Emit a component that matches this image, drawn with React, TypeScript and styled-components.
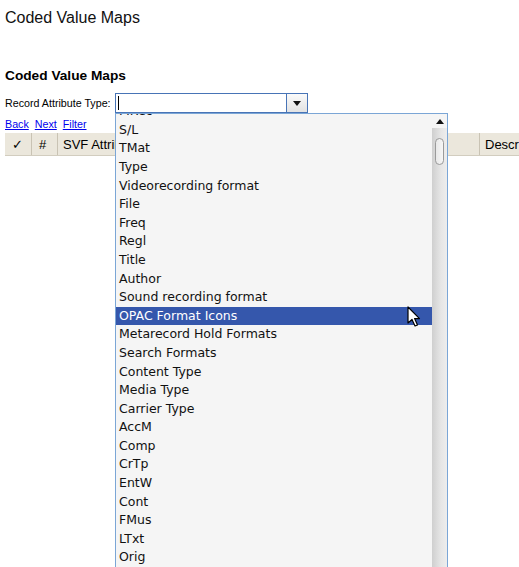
import React from "react";
import styled, { createGlobalStyle } from "styled-components";

const Global = createGlobalStyle`
  html, body { margin: 0; padding: 0; background: #fff; overflow: hidden; }
  body { font-family: "Liberation Sans", Arial, sans-serif; color: #000; }
  #root { width: 519px; height: 567px; overflow: hidden; }
`;

const Page = styled.div`
  padding: 8px 0 0 5px;
  width: 600px;
`;

const Title = styled.h1`
  margin: 0;
  font-size: 16px;
  line-height: 19px;
  font-weight: normal;
  color: #111;
`;

const Heading = styled.h2`
  margin: 41px 0 0;
  font-size: 13.7px;
  line-height: 16px;
  font-weight: bold;
`;

const FormRow = styled.div`
  display: flex;
  align-items: center;
  margin-top: 9px;
  height: 20px;
`;

const Label = styled.label`
  font-size: 10.7px;
  margin-right: 5px;
  width: 105px;
  white-space: nowrap;
`;

const Combo = styled.div`
  position: relative;
  display: flex;
  width: 193px;
  height: 20px;
  box-sizing: border-box;
  border: 1px solid #4874b6;
  background: #fff;
`;

const Field = styled.div`
  flex: 1;
  position: relative;
  &::before {
    content: "";
    position: absolute;
    left: 2px;
    top: 2px;
    width: 1px;
    height: 14px;
    background: #000;
  }
`;

const ArrowButton = styled.div`
  width: 20px;
  border-left: 1px solid #4874b6;
  background: linear-gradient(#fafafa, #e2e2e2);
  display: flex;
  align-items: center;
  justify-content: center;
`;

const Tri = styled.div<{ $up?: boolean }>`
  width: 0;
  height: 0;
  border-left: 4px solid transparent;
  border-right: 4px solid transparent;
  ${(p) => (p.$up ? "border-bottom: 5px solid #111;" : "border-top: 5px solid #111;")}
`;

const Dropdown = styled.div`
  position: absolute;
  left: -1px;
  top: 19px;
  width: 333px;
  height: 470px;
  box-sizing: border-box;
  border: 1px solid #7ba6d6;
  background: #f5f5f5;
  display: flex;
  z-index: 5;
`;

const List = styled.div`
  flex: 1;
  overflow: hidden;
  position: relative;
`;

const ListInner = styled.div`
  margin-top: -11.8px;
`;

const Item = styled.div<{ $sel?: boolean }>`
  height: 18.6px;
  line-height: 18.6px;
  padding-left: 3px;
  font-family: "DejaVu Sans", Verdana, sans-serif;
  font-size: 12.5px;
  white-space: nowrap;
  color: ${(p) => (p.$sel ? "#fff" : "#111")};
  background: ${(p) => (p.$sel ? "#3557ac" : "transparent")};
`;

const Scrollbar = styled.div`
  width: 15px;
  display: flex;
  flex-direction: column;
  background: #f5f5f5;
`;

const ScrollBtn = styled.div`
  height: 14px;
  display: flex;
  align-items: center;
  justify-content: center;
`;

const Track = styled.div`
  flex: 1;
  background: linear-gradient(to right, #cfcfcf, #e6e6e6 60%, #ededed);
  padding-top: 10px;
  display: flex;
  justify-content: center;
  align-items: flex-start;
`;

const Thumb = styled.div`
  width: 9px;
  height: 27px;
  box-sizing: border-box;
  border: 1px solid #9a9a9a;
  border-radius: 5px;
  background: linear-gradient(to right, #e8e8e8, #f6f6f6);
`;

const Cursor = styled.svg`
  position: absolute;
  left: 291px;
  top: 192px;
  width: 14px;
  height: 22px;
`;

const Links = styled.div`
  display: flex;
  gap: 6px;
  margin-top: 5px;
  font-size: 10.7px;
  line-height: 13px;
`;

const Link = styled.a`
  color: #0000ee;
  text-decoration: underline;
`;

const HeaderRow = styled.div`
  display: flex;
  margin-top: 2px;
  height: 23px;
  background: #ebe7dc;
  border-bottom: 1px solid #d2cdbf;
  box-sizing: border-box;
  font-size: 13px;
`;

const HeadCell = styled.div<{ $w?: number }>`
  ${(p) => (p.$w ? `width: ${p.$w}px;` : "flex: 1;")}
  flex-shrink: 0;
  box-sizing: border-box;
  border-right: 1px solid #c9c3b4;
  padding-left: ${(p) => (p.$w && p.$w < 30 ? 7 : 5)}px;
  display: flex;
  align-items: center;
  white-space: nowrap;
`;

const items = [
  "MRec",
  "S/L",
  "TMat",
  "Type",
  "Videorecording format",
  "File",
  "Freq",
  "Regl",
  "Title",
  "Author",
  "Sound recording format",
  "OPAC Format Icons",
  "Metarecord Hold Formats",
  "Search Formats",
  "Content Type",
  "Media Type",
  "Carrier Type",
  "AccM",
  "Comp",
  "CrTp",
  "EntW",
  "Cont",
  "FMus",
  "LTxt",
  "Orig",
  "Proj",
];

export default function App() {
  return (
    <>
      <Global />
      <Page>
        <Title>Coded Value Maps</Title>
        <Heading>Coded Value Maps</Heading>
        <FormRow>
          <Label>Record Attribute Type:</Label>
          <Combo>
            <Field />
            <ArrowButton>
              <Tri />
            </ArrowButton>
            <Dropdown>
              <List>
                <ListInner>
                  {items.map((t) => (
                    <Item key={t} $sel={t === "OPAC Format Icons"}>
                      {t}
                    </Item>
                  ))}
                </ListInner>
                <Cursor viewBox="0 0 14 22">
                  <path
                    d="M1 1 L1 17 L5 13.5 L8 20 L10.5 19 L7.6 12.6 L12.5 12.6 Z"
                    fill="#fff"
                    stroke="#000"
                    strokeWidth="1.2"
                    strokeLinejoin="round"
                  />
                </Cursor>
              </List>
              <Scrollbar>
                <ScrollBtn>
                  <Tri $up />
                </ScrollBtn>
                <Track>
                  <Thumb />
                </Track>
                <ScrollBtn>
                  <Tri />
                </ScrollBtn>
              </Scrollbar>
            </Dropdown>
          </Combo>
        </FormRow>
        <Links>
          <Link href="#">Back</Link>
          <Link href="#">Next</Link>
          <Link href="#">Filter</Link>
        </Links>
        <HeaderRow>
          <HeadCell $w={27}>✓</HeadCell>
          <HeadCell $w={26}>#</HeadCell>
          <HeadCell $w={422}>SVF Attribute</HeadCell>
          <HeadCell $w={120}>Description</HeadCell>
        </HeaderRow>
      </Page>
    </>
  );
}
